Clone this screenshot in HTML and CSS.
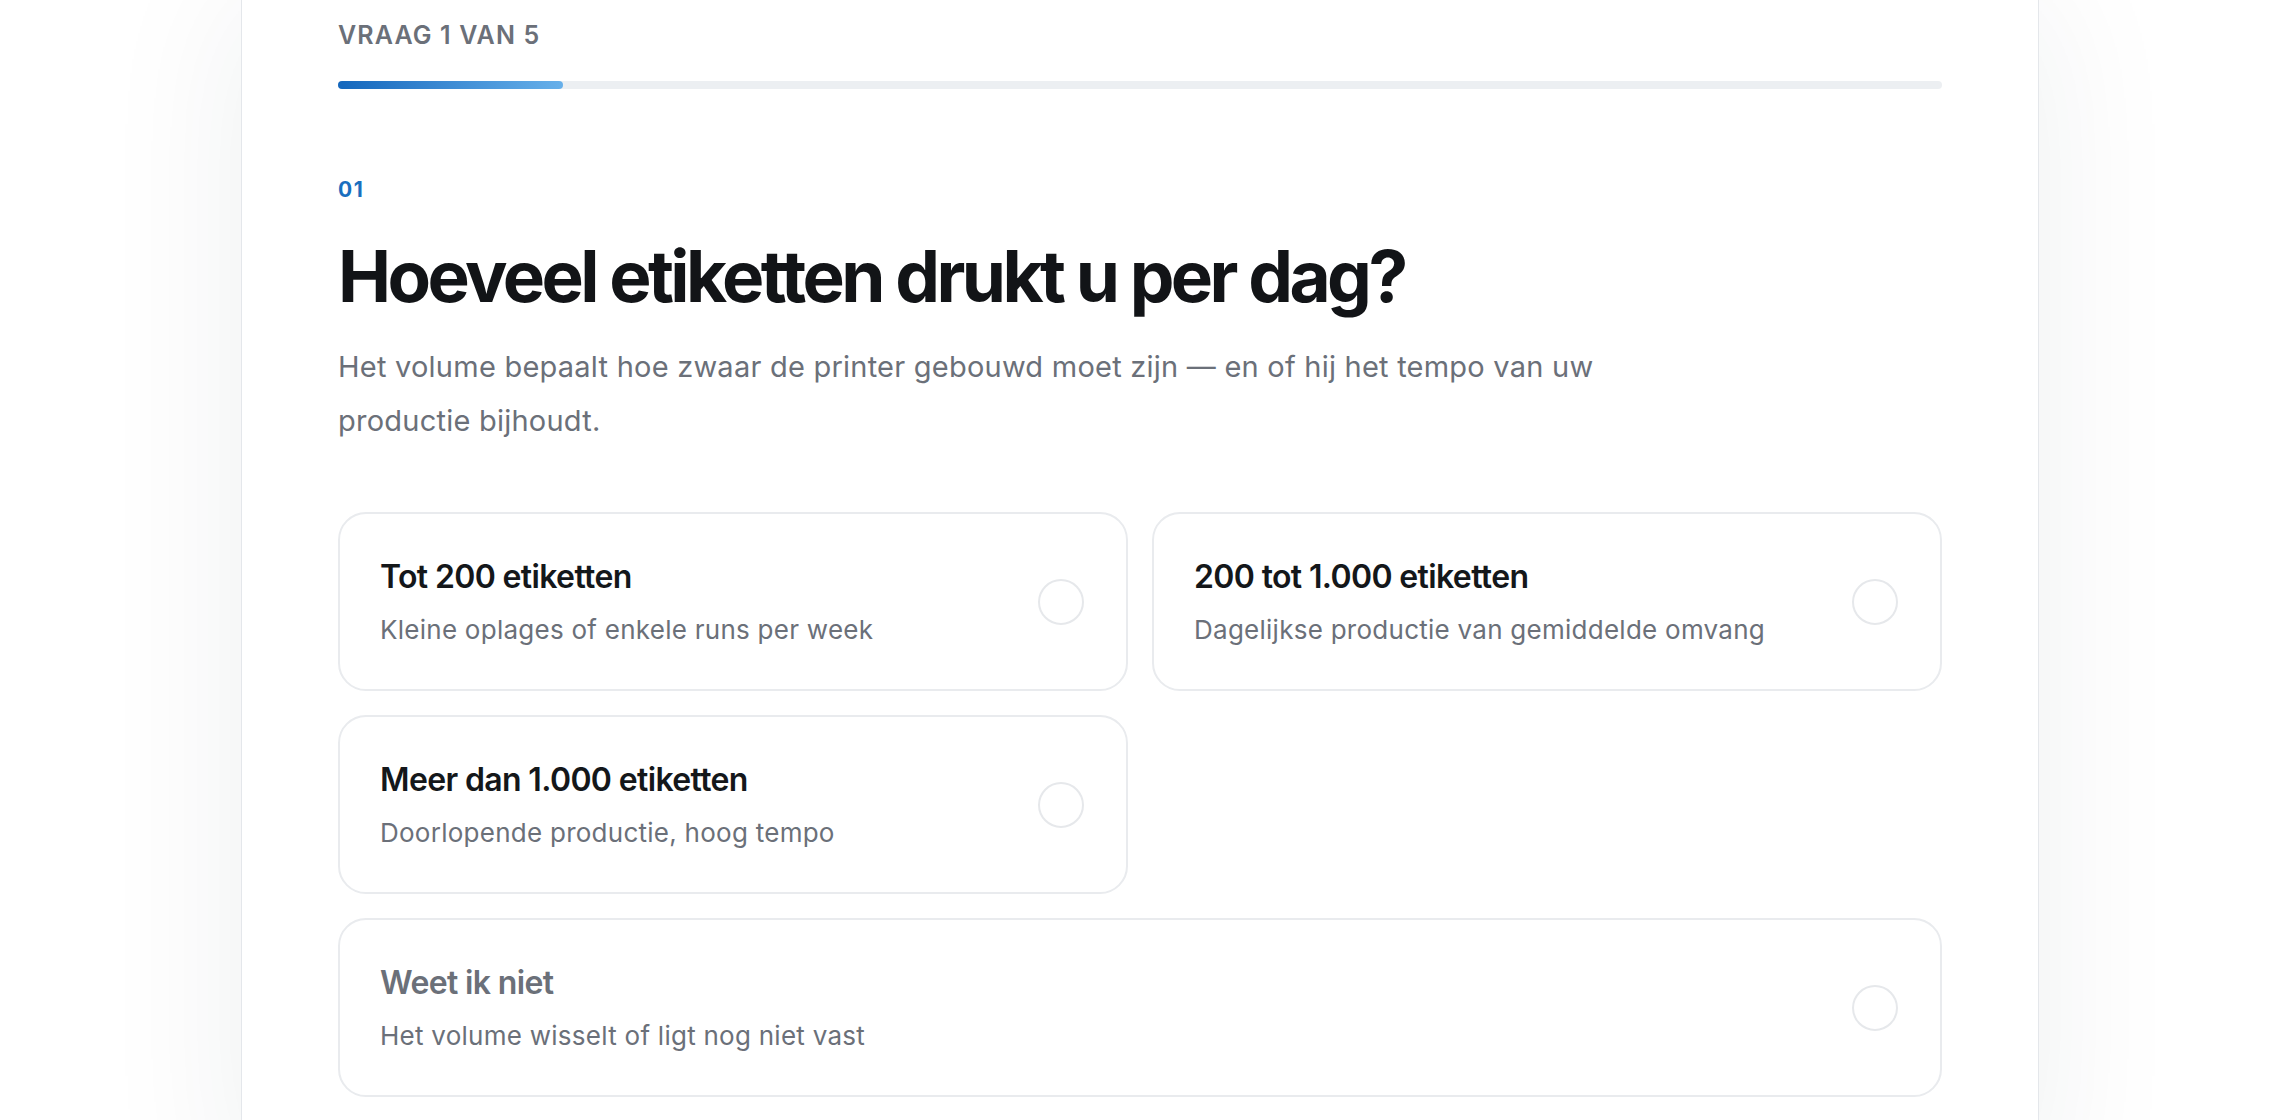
FILE: index.html
```html
<!DOCTYPE html>
<html lang="nl">
<head>
    <meta charset="UTF-8">
    <meta name="viewport" content="width=device-width, initial-scale=1.0">
    <title>Printer keuzehulp</title>
    <link rel="stylesheet" href="styles.css">
</head>
<body>
    <main class="quiz-card">
        <!-- voortgang -->
        <div class="progress">
            <p class="progress-label">Vraag 1 van 5</p>
            <div class="progress-track">
                <div class="progress-fill" style="width: 14%;"></div>
            </div>
        </div>

        <!-- vraag -->
        <section class="question">
            <p class="question-number">01</p>
            <h1 class="question-title">Hoeveel etiketten drukt u per dag?</h1>
            <p class="question-intro">Het volume bepaalt hoe zwaar de printer gebouwd moet zijn — en of hij het tempo van uw productie bijhoudt.</p>

            <div class="options">
                <label class="option">
                    <span class="option-text">
                        <span class="option-title">Tot 200 etiketten</span>
                        <span class="option-desc">Kleine oplages of enkele runs per week</span>
                    </span>
                    <span class="radio"></span>
                </label>
                <label class="option">
                    <span class="option-text">
                        <span class="option-title">200 tot 1.000 etiketten</span>
                        <span class="option-desc">Dagelijkse productie van gemiddelde omvang</span>
                    </span>
                    <span class="radio"></span>
                </label>
                <label class="option">
                    <span class="option-text">
                        <span class="option-title">Meer dan 1.000 etiketten</span>
                        <span class="option-desc">Doorlopende productie, hoog tempo</span>
                    </span>
                    <span class="radio"></span>
                </label>
                <label class="option option-unsure">
                    <span class="option-text">
                        <span class="option-title">Weet ik niet</span>
                        <span class="option-desc">Het volume wisselt of ligt nog niet vast</span>
                    </span>
                    <span class="radio"></span>
                </label>
            </div>
        </section>
    </main>
</body>
</html>
```

FILE: styles.css
```css
* {
    box-sizing: border-box;
}
body {
    margin: 0;
    background: #ffffff;
    font-family: Inter, "Noto Sans", Arial, sans-serif;
    color: #14171a;
    overflow: hidden;
}
.quiz-card {
    width: 1798px;
    min-height: 1200px;
    margin: 0 auto;
    padding: 20px 96px 40px;
    background: #ffffff;
    border: 1px solid #e4e7eb;
    border-top: 0;
    box-shadow: 0 0 140px rgba(30, 41, 59, 0.07);
}

/* voortgang */
.progress-label {
    margin: 0;
    font-size: 25px;
    line-height: 31px;
    font-weight: 600;
    letter-spacing: 0.045em;
    text-transform: uppercase;
    color: #6b7079;
}
.progress-track {
    height: 8px;
    margin-top: 30px;
    border-radius: 4px;
    background: #eceff2;
}
.progress-fill {
    height: 100%;
    border-radius: 4px;
    background: linear-gradient(90deg, #1467bd, #67b0ea);
}

/* vraag */
.question-number {
    margin: 88px 0 0;
    font-size: 21px;
    line-height: 25px;
    font-weight: 700;
    letter-spacing: 0.08em;
    color: #1a6fbf;
}
.question-title {
    margin: 34px 0 0;
    font-size: 71px;
    line-height: 80px;
    font-weight: 700;
    letter-spacing: -0.05em;
    color: #121417;
}
.question-intro {
    max-width: 1290px;
    margin: 24px 0 0;
    font-size: 29px;
    line-height: 54px;
    letter-spacing: 0.008em;
    color: #6b7079;
}

/* antwoorden */
.options {
    display: grid;
    grid-template-columns: 1fr 1fr;
    gap: 24px;
    margin-top: 64px;
}
.option {
    display: flex;
    align-items: center;
    justify-content: space-between;
    height: 179px;
    padding: 0 42px 0 40px;
    border: 2px solid #e9ebee;
    border-radius: 28px;
    background: #ffffff;
    cursor: pointer;
}
.option-unsure {
    grid-column: 1 / -1;
}
.option-text {
    display: flex;
    flex-direction: column;
    gap: 16px;
}
.option-title {
    font-size: 32px;
    line-height: 40px;
    font-weight: 600;
    letter-spacing: -0.02em;
    color: #14171a;
}
.option-unsure .option-title {
    color: #6b7079;
}
.option-desc {
    font-size: 26px;
    line-height: 34px;
    letter-spacing: 0.01em;
    color: #6b7079;
}
.radio {
    flex: none;
    width: 46px;
    height: 46px;
    border: 2px solid #e6e8eb;
    border-radius: 50%;
}
```
